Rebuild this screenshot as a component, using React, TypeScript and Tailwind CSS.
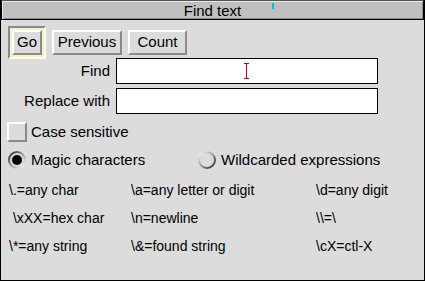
import React from 'react';

const Radio = ({ on }: { on: boolean }) => (
  <svg width="20" height="20" viewBox="0 0 20 20" className="shrink-0">
    <defs>
      <linearGradient id={on ? 'rg-on' : 'rg-off'} x1="0" y1="0" x2="1" y2="1">
        <stop offset="0" stopColor={on ? '#202020' : '#ffffff'} />
        <stop offset="0.5" stopColor="#9a9a9a" />
        <stop offset="1" stopColor={on ? '#ffffff' : '#202020'} />
      </linearGradient>
    </defs>
    <circle cx="10" cy="10" r="8" fill="#dcdcdc" stroke={`url(#${on ? 'rg-on' : 'rg-off'})`} strokeWidth="2" />
    {on && <circle cx="10" cy="10" r="5" fill="#000" />}
  </svg>
);

const Button = ({ label, w }: { label: string; w: string }) => (
  <div
    className={`${w} h-[25px] flex items-center justify-center border-2 border-t-white border-l-white border-b-[#8a8a8a] border-r-[#8a8a8a] bg-[#dcdcdc] text-[15px]`}
  >
    {label}
  </div>
);

const helps = [
  ['\\.=any char', '\\a=any letter or digit', '\\d=any digit'],
  [' \\xXX=hex char', '\\n=newline', '\\\\=\\'],
  ['\\*=any string', '\\&=found string', '\\cX=ctl-X'],
];

export default function App() {
  return (
    <div className="w-[425px] h-[281px] flex flex-col bg-[#dcdcdc] border-x border-b border-black text-black font-['Liberation_Sans',Arial,sans-serif] overflow-hidden">
      {/* Title bar */}
      <div className="h-[20px] shrink-0 flex items-center justify-center border border-black border-t-[#555] bg-[#c0c0c0] shadow-[inset_1px_1px_0_#e8e8e8,inset_-1px_-1px_0_#8a8a8a] text-[15px] leading-none relative">
        Find text
        <span className="absolute left-[270px] top-[2px] w-[2px] h-[6px] bg-[#19b4e6]" />
      </div>

      {/* Buttons */}
      <div className="flex items-center mt-[6px] ml-[7px] gap-[6px]">
        <div className="p-[2px] border-2 border-t-[#8a8a8a] border-l-[#8a8a8a] border-b-[#fffbe0] border-r-[#fffbe0] bg-[#f4f0c8]">
          <Button label="Go" w="w-[30px]" />
        </div>
        <Button label="Previous" w="w-[70px]" />
        <Button label="Count" w="w-[59px]" />
      </div>

      {/* Fields */}
      <div className="flex flex-col gap-[4px] mt-[-1px] text-[15px]">
        <div className="flex items-center">
          <span className="w-[109px] text-right">Find</span>
          <div className="ml-[6px] w-[262px] h-[26px] bg-white border border-black relative">
            <span className="absolute left-[129px] top-[4px] w-[1px] h-[16px] bg-[#d00000]" />
            <span className="absolute left-[127px] top-[4px] w-[5px] h-[1px] bg-[#d00000]" />
            <span className="absolute left-[127px] top-[19px] w-[5px] h-[1px] bg-[#d00000]" />
          </div>
        </div>
        <div className="flex items-center">
          <span className="w-[109px] text-right">Replace with</span>
          <div className="ml-[6px] w-[262px] h-[26px] bg-white border border-black" />
        </div>
      </div>

      {/* Options */}
      <div className="flex items-center mt-[7px] ml-[6px] gap-[4px] text-[15px]">
        <div className="w-[20px] h-[20px] border-2 border-t-white border-l-white border-b-[#8a8a8a] border-r-[#8a8a8a] bg-[#dcdcdc]" />
        <span>Case sensitive</span>
      </div>
      <div className="flex items-center mt-[5px] ml-[6px] text-[15px]">
        <div className="flex items-center gap-[4px] w-[190px]">
          <Radio on />
          <span>Magic characters</span>
        </div>
        <div className="flex items-center gap-[4px]">
          <Radio on={false} />
          <span>Wildcarded expressions</span>
        </div>
      </div>

      {/* Help */}
      <div className="flex flex-col mt-[10px] ml-[8px] gap-[10px] text-[14px] leading-[18px]">
        {helps.map((row, i) => (
          <div key={i} className="grid grid-cols-[122px_185px_auto]">
            {row.map((t, j) => (
              <span key={j} className="whitespace-pre">{t}</span>
            ))}
          </div>
        ))}
      </div>
    </div>
  );
}
